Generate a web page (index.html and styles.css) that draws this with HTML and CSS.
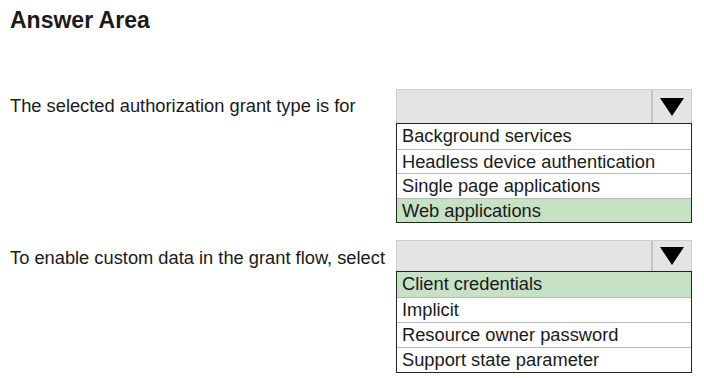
FILE: index.html
```html
<!DOCTYPE html>
<html lang="en">
<head>
    <meta charset="UTF-8">
    <meta name="viewport" content="width=device-width, initial-scale=1.0">
    <title>Answer Area</title>
    <link rel="stylesheet" href="styles.css">
</head>
<body class="mainBody">
    <div class="answerArea">
        <h1 class="title">Answer Area</h1>
        <div class="question">
            <div class="label">The selected authorization grant type is for</div>
            <div class="dropdown">
                <div class="select">
                    <span class="value"></span>
                    <span class="arrow"><svg width="24" height="18" viewBox="0 0 24 18"><path d="M0 0 L24 0 L12 18 Z" fill="#000"/></svg></span>
                </div>
                <ul class="options">
                    <li>Background services</li>
                    <li>Headless device authentication</li>
                    <li>Single page applications</li>
                    <li class="picked">Web applications</li>
                </ul>
            </div>
        </div>
        <div class="question second">
            <div class="label">To enable custom data in the grant flow, select</div>
            <div class="dropdown">
                <div class="select">
                    <span class="value"></span>
                    <span class="arrow"><svg width="24" height="18" viewBox="0 0 24 18"><path d="M0 0 L24 0 L12 18 Z" fill="#000"/></svg></span>
                </div>
                <ul class="options">
                    <li class="picked">Client credentials</li>
                    <li>Implicit</li>
                    <li>Resource owner password</li>
                    <li>Support state parameter</li>
                </ul>
            </div>
        </div>
    </div>
</body>
</html>
```

FILE: styles.css
```css
.mainBody {
    margin: 0;
    background-color: #fff;
    font-family: "Liberation Sans", Arial, Helvetica, sans-serif;
    color: #1a1a1a;
}
.answerArea {
    padding: 7px 10px 0 10px;
}
.title {
    margin: 0 0 56px 0;
    font-size: 23px;
    font-weight: bold;
    line-height: 26px;
}
.question {
    display: grid;
    grid-template-columns: 386px 296px;
    margin-bottom: 17px;
}
.question:last-child {
    margin-bottom: 0;
}
.label {
    font-size: 18.3px;
    line-height: 34px;
}
.select {
    display: flex;
    height: 33px;
    background-color: #e4e4e4;
    border: 1px solid #cfcfcf;
    border-bottom: none;
}
.second .select {
    height: 30px;
}
.second .label {
    line-height: 36px;
}
.value {
    flex: 1;
}
.arrow {
    width: 38px;
    display: flex;
    align-items: center;
    justify-content: center;
    border-left: 2px solid #c4c4c4;
}
.options {
    list-style: none;
    margin: 0;
    padding: 0;
    border: 1px solid #222;
}
.options li {
    box-sizing: border-box;
    height: 24.5px;
    line-height: 23px;
    padding-left: 5px;
    font-size: 18.3px;
    border-top: 1px solid #b8b8b8;
}
.second .options li {
    height: 25px;
}
.options li:first-child {
    border-top: none;
}
.options li.picked {
    background-color: #c6e1c3;
}
```
